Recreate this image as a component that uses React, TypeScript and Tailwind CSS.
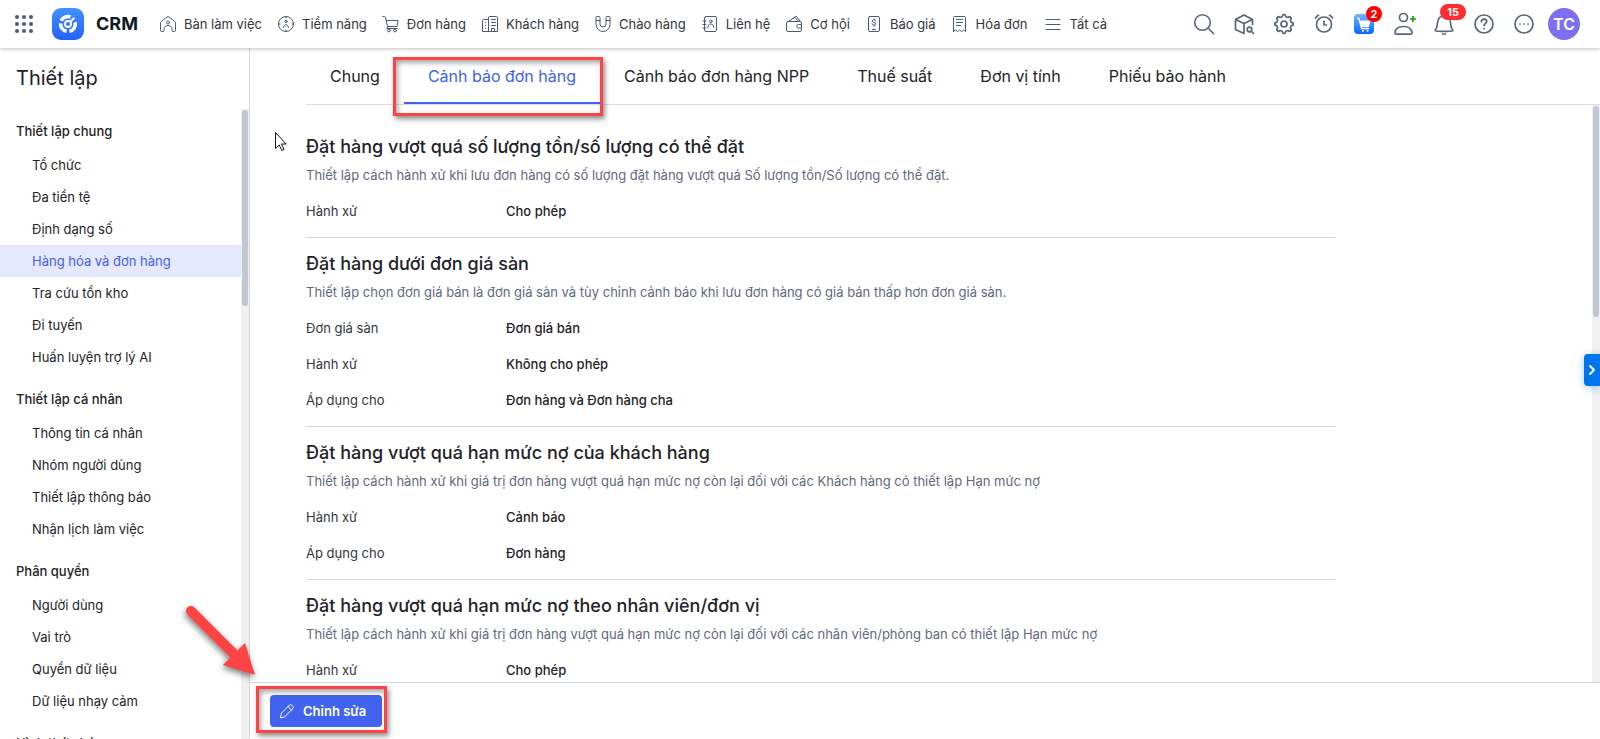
import type { ReactNode, SVGProps } from "react";
import { clsx } from "clsx";

interface Row {
  label: string;
  value: string;
}

interface Section {
  title: string;
  description: string;
  rows: Row[];
}

interface MenuGroup {
  title: string;
  items: string[];
}

const MENU: MenuGroup[] = [
  {
    title: "Thiết lập chung",
    items: [
      "Tổ chức",
      "Đa tiền tệ",
      "Định dạng số",
      "Hàng hóa và đơn hàng",
      "Tra cứu tồn kho",
      "Đi tuyến",
      "Huấn luyện trợ lý AI",
    ],
  },
  {
    title: "Thiết lập cá nhân",
    items: ["Thông tin cá nhân", "Nhóm người dùng", "Thiết lập thông báo", "Nhận lịch làm việc"],
  },
  {
    title: "Phân quyền",
    items: ["Người dùng", "Vai trò", "Quyền dữ liệu", "Dữ liệu nhạy cảm"],
  },
  { title: "Hình thức bán", items: [] },
];

const TABS = [
  "Chung",
  "Cảnh báo đơn hàng",
  "Cảnh báo đơn hàng NPP",
  "Thuế suất",
  "Đơn vị tính",
  "Phiếu bảo hành",
];

const SECTIONS: Section[] = [
  {
    title: "Đặt hàng vượt quá số lượng tồn/số lượng có thể đặt",
    description:
      "Thiết lập cách hành xử khi lưu đơn hàng có số lượng đặt hàng vượt quá Số lượng tồn/Số lượng có thể đặt.",
    rows: [{ label: "Hành xử", value: "Cho phép" }],
  },
  {
    title: "Đặt hàng dưới đơn giá sàn",
    description:
      "Thiết lập chọn đơn giá bán là đơn giá sàn và tùy chỉnh cảnh báo khi lưu đơn hàng có giá bán thấp hơn đơn giá sàn.",
    rows: [
      { label: "Đơn giá sàn", value: "Đơn giá bán" },
      { label: "Hành xử", value: "Không cho phép" },
      { label: "Áp dụng cho", value: "Đơn hàng và Đơn hàng cha" },
    ],
  },
  {
    title: "Đặt hàng vượt quá hạn mức nợ của khách hàng",
    description:
      "Thiết lập cách hành xử khi giá trị đơn hàng vượt quá hạn mức nợ còn lại đối với các Khách hàng có thiết lập Hạn mức nợ",
    rows: [
      { label: "Hành xử", value: "Cảnh báo" },
      { label: "Áp dụng cho", value: "Đơn hàng" },
    ],
  },
  {
    title: "Đặt hàng vượt quá hạn mức nợ theo nhân viên/đơn vị",
    description:
      "Thiết lập cách hành xử khi giá trị đơn hàng vượt quá hạn mức nợ còn lại đối với các nhân viên/phòng ban có thiết lập Hạn mức nợ",
    rows: [{ label: "Hành xử", value: "Cho phép" }],
  },
];

// Line icon base, 1 unit = 1 pixel
function Icon({ size = 18, children, ...rest }: SVGProps<SVGSVGElement> & { size?: number }) {
  return (
    <svg
      width={size}
      height={size}
      viewBox={`0 0 ${size} ${size}`}
      fill="none"
      stroke="currentColor"
      strokeWidth={1}
      strokeLinecap="round"
      strokeLinejoin="round"
      className="shrink-0"
      aria-hidden="true"
      {...rest}
    >
      {children}
    </svg>
  );
}

const NAV: { label: string; icon: ReactNode }[] = [
  {
    label: "Bàn làm việc",
    icon: (
      <Icon>
        <path d="M4 16.500H2.500a1 1 0 0 1-1-1V8a2 2 0 0 1 .8-1.600L8 2a1.600 1.600 0 0 1 2 0l5.700 4.400a2 2 0 0 1 .8 1.600v7.500a1 1 0 0 1-1 1H14a1 1 0 0 1-1-1V14c0-2-1.500-3.500-4-3.500S5 12 5 14v1.500a1 1 0 0 1-1 1Z" />
        <circle cx="9" cy="7.500" r="1.500" />
      </Icon>
    ),
  },
  {
    label: "Tiềm năng",
    icon: (
      <Icon>
        <circle cx="9" cy="9" r="7.500" />
        <path d="M9 1.500v1.500M9 15v1.500M1.500 9h1.500M15 9h1.500M6.500 12.500c.3-1.800 1.200-2.800 2.500-2.800s2.200 1 2.500 2.800" />
        <circle cx="9" cy="6.500" r="1.200" />
      </Icon>
    ),
  },
  {
    label: "Đơn hàng",
    icon: (
      <Icon>
        <path d="M.8 1.500h1.700a1 1 0 0 1 1 .8l2 9.200h9.500l1.200-6H4.200M5.500 11.500l-.5 2h10" />
        <circle cx="7" cy="15.500" r="1.400" />
        <circle cx="13" cy="15.500" r="1.400" />
      </Icon>
    ),
  },
  {
    label: "Khách hàng",
    icon: (
      <Icon>
        <path d="M7.500 16.500v-14a1 1 0 0 1 1-1h7a1 1 0 0 1 1 1v14H1.500v-11a1 1 0 0 1 1-1h5M10.500 4.500h4M10.500 7.500h4M10.500 10.500h4M10.500 16.500v-3h3v3M4.500 7.500v.1M4.500 10.500v.1M4.500 13.500v.1" />
      </Icon>
    ),
  },
  {
    label: "Chào hàng",
    icon: (
      <Icon>
        <path d="M2 2.500a1 1 0 0 1 1-1h2a1 1 0 0 1 1 1V9a3 3 0 0 0 6 0V2.500a1 1 0 0 1 1-1h2a1 1 0 0 1 1 1V9.500a7 7 0 0 1-14 0ZM2 5.500h4M12 5.500h4" />
      </Icon>
    ),
  },
  {
    label: "Liên hệ",
    icon: (
      <Icon>
        <rect x="3.500" y="1.500" width="12" height="15" rx="1.500" />
        <path d="M2 6h3M2 9.500h3M2 13h3M6.800 12.500C7.300 10 8.200 9 9.800 9s2.500 1 3 3.500" />
        <circle cx="9.800" cy="6.300" r="1.300" />
      </Icon>
    ),
  },
  {
    label: "Cơ hội",
    icon: (
      <Icon>
        <rect x="1.500" y="6.500" width="15" height="10" rx="1.500" />
        <path d="M3.500 6.200 9.800 2.300l3.700 3.900M7.500 3.500l3.800-2.300 3.800 5M16.500 9.500h-3a1.800 1.800 0 0 0 0 3.600h3" />
      </Icon>
    ),
  },
  {
    label: "Báo giá",
    icon: (
      <Icon>
        <rect x="3.500" y="1.500" width="11" height="15" rx="1.500" />
        <path d="M7.500 14.500h3M10.800 6c-.2-.8-.9-1.200-1.800-1.200-1 0-1.800.5-1.800 1.300 0 2 3.600.8 3.600 2.800 0 .8-.8 1.300-1.800 1.300s-1.700-.5-1.900-1.300M9 4v1M9 10.200v1" />
      </Icon>
    ),
  },
  {
    label: "Hóa đơn",
    icon: (
      <Icon>
        <path d="M2.500 16.500v-14a1 1 0 0 1 1-1h10a1 1 0 0 1 1 1v14l-2-1.500-2 1.500-2-1.500-2 1.500-2-1.500ZM5.500 4.500h6M5.500 7.500h6M5.500 10.500h4" />
      </Icon>
    ),
  },
  {
    label: "Tất cả",
    icon: (
      <Icon size={20}>
        <path d="M3 5.500h14M3 10.500h14M3 15.500h14" />
      </Icon>
    ),
  },
];

function AppLogo() {
  return (
    <svg width="32" height="32" viewBox="0 0 32 32" className="shrink-0" aria-hidden="true">
      <defs>
        <linearGradient id="logo" x1="0" y1="0" x2="0" y2="1">
          <stop offset="0" stopColor="#3f93fd" />
          <stop offset="1" stopColor="#2461fb" />
        </linearGradient>
      </defs>
      <rect width="32" height="32" rx="9" fill="url(#logo)" />
      <g fill="none" stroke="#fff">
        <path d="M9.200 12.800A7.400 7.400 0 0 1 18.500 9" strokeWidth="3.600" />
        <path d="M23.200 14.200A7.400 7.400 0 0 1 17.400 23.300" strokeWidth="3.600" />
        <path d="M14.600 23.300A7.400 7.400 0 0 1 8.600 15.400" strokeWidth="3.600" />
        <circle cx="16" cy="16" r="3" strokeWidth="1.900" />
        <path d="m18.300 13.700 3.500-3.500" strokeWidth="2" strokeLinecap="round" />
      </g>
    </svg>
  );
}

function Header() {
  return (
    <header className="relative z-20 flex h-12 shrink-0 items-center bg-white pr-5 pl-[15px] shadow-[0_1px_4px_rgba(0,0,0,0.25)]">
      <button type="button" aria-label="Ứng dụng" className="text-[#4d5a75]">
        <svg width="18" height="18" viewBox="0 0 18 18" fill="currentColor" aria-hidden="true">
          {[2, 9, 16].map((y) => [2, 9, 16].map((x) => <circle key={`${x}-${y}`} cx={x} cy={y} r="2" />))}
        </svg>
      </button>
      <a href="#" className="ml-[19px] flex items-center gap-3 text-lg font-bold text-[#111827]">
        <AppLogo />
        CRM
      </a>
      <nav className="ml-[21px] flex items-center gap-[15px] text-[13px] text-[#33363f]">
        {NAV.map((item) => (
          <a key={item.label} href="#" className="flex items-center gap-[7px] whitespace-nowrap">
            <span className="text-[#4d5a75]">{item.icon}</span>
            <span className="pt-0.5">{item.label}</span>
          </a>
        ))}
      </nav>
      <div className="ml-auto flex items-center gap-4 text-[#5b6579]">
        <button type="button" aria-label="Tìm kiếm">
          <Icon size={24} strokeWidth={1.600}>
            <circle cx="10.500" cy="10.500" r="7.800" />
            <path d="m16 16 5.500 5.500" />
          </Icon>
        </button>
        <button type="button" aria-label="Tra cứu hàng hóa">
          <Icon size={24} strokeWidth={1.700}>
            <path d="M12 21.500 3.500 17.500V7.500L12 3l8.500 4.500v5M3.500 7.500l8.500 4 8.500-4M12 11.500v10" />
            <circle cx="17.500" cy="17.500" r="2.300" />
            <path d="m19.500 19.500 2 2" />
          </Icon>
        </button>
        <button type="button" aria-label="Thiết lập">
          <Icon size={24} strokeWidth={1.700}>
            <path d="m10.200 4.700.8-2h2l.8 2 2 .8 2-.9 1.500 1.500-.9 2 .8 2 2 .9v2l-2 .9-.8 2 .9 2-1.500 1.500-2-.9-2 .8-.8 2h-2l-.8-2-2-.8-2 .9-1.500-1.500.9-2-.8-2-2-.9v-2l2-.9.8-2-.9-2 1.500-1.500 2 .9Z" />
            <circle cx="12" cy="12" r="3" />
          </Icon>
        </button>
        <button type="button" aria-label="Nhắc nhở">
          <Icon size={24} strokeWidth={1.700}>
            <circle cx="12" cy="12.500" r="7.500" />
            <path d="M12 9v4h2.500M3.500 6c.7-1.300 1.700-2.200 3-2.800M20.500 6c-.7-1.300-1.700-2.200-3-2.800" />
          </Icon>
        </button>
        <button type="button" aria-label="Giỏ hàng" className="relative">
          <svg width="24" height="24" viewBox="0 0 24 24" fill="none" aria-hidden="true">
            <defs>
              <linearGradient id="cart" x1="0" y1="0" x2="0" y2="1">
                <stop offset="0" stopColor="#74b5ff" />
                <stop offset="1" stopColor="#0a66ff" />
              </linearGradient>
            </defs>
            <rect x="2" y="2" width="20" height="20" rx="4" fill="url(#cart)" />
            <path d="M7.500 8.500h11l-1.700 6.500H9.500Z" fill="#fff" />
            <path d="M5 6.500h2L9.500 16.500h7.500" stroke="#fff" strokeWidth="1.300" />
            <circle cx="11" cy="18.700" r="1" fill="#fff" />
            <circle cx="15.500" cy="18.700" r="1" fill="#fff" />
          </svg>
          <span className="absolute -top-1.5 -right-1.5 flex size-4 items-center justify-center rounded-full bg-[#fe0000] text-[11px] font-bold text-white">
            2
          </span>
        </button>
        <button type="button" aria-label="Thêm người dùng">
          <Icon size={24} strokeWidth={1.700}>
            <circle cx="11.500" cy="5.500" r="4" />
            <path d="M4.500 22.200h14a1.500 1.500 0 0 0 1.500-1.700c-.5-4-3.700-6-8.500-6S3.500 16.500 3 20.500a1.500 1.500 0 0 0 1.500 1.700Z" />
            <path d="M21 4v6M18 7h6" stroke="#1c9a10" strokeLinecap="butt" />
          </Icon>
        </button>
        <button type="button" aria-label="Thông báo" className="relative">
          <Icon size={24} strokeWidth={1.700}>
            <path d="M3 18.500c2.500-2.500 2-4.500 2.500-8C6 6.500 8.500 4 12 4s6 2.500 6.500 6.500c.5 3.500 0 5.500 2.500 8-3 1.300-15 1.300-18 0Z" />
            <path d="M10.500 22h3" />
          </Icon>
          <span className="absolute -top-2 -right-2.5 flex h-4 items-center justify-center rounded-full bg-[#fd2c2e] px-[7px] text-[11px] font-bold text-white">
            15
          </span>
        </button>
        <button type="button" aria-label="Trợ giúp">
          <Icon size={24} strokeWidth={1.700}>
            <circle cx="12" cy="12" r="9" />
            <path d="M9.300 9.700c0-1.500 1.200-2.500 2.700-2.500s2.700 1 2.700 2.400c0 2-2.700 2-2.700 4M12 16.500v.2" />
          </Icon>
        </button>
        <button type="button" aria-label="Thêm">
          <Icon size={24} strokeWidth={1.700}>
            <circle cx="12" cy="12" r="9" />
            <path d="M8 12h.1M12 12h.1M16 12h.1" />
          </Icon>
        </button>
        <button
          type="button"
          className="-ml-1 flex size-8 items-center justify-center rounded-full bg-[#7e6ff0] text-base font-semibold text-white"
        >
          TC
        </button>
      </div>
    </header>
  );
}

function Sidebar() {
  return (
    <aside className="flex w-[250px] shrink-0 flex-col border-r border-[#d3d7de]">
      <h1 className="px-4 pt-4 pb-[17px] text-xl text-[#1f2229]">Thiết lập</h1>
      <div className="flex min-h-0 flex-1">
        <nav className="flex-1 overflow-hidden pt-1 text-[13px] text-[#1f2229]">
          {MENU.map((group) => (
            <section key={group.title} className="mb-2">
              <h2 className="px-4 font-medium leading-9">{group.title}</h2>
              <ul>
                {group.items.map((item) => (
                  <li key={item}>
                    <a
                      href="#"
                      className={clsx(
                        "block pl-8 leading-8",
                        item === "Hàng hóa và đơn hàng" && "bg-[#e6e9fe] text-[#4262f0]",
                      )}
                    >
                      {item}
                    </a>
                  </li>
                ))}
              </ul>
            </section>
          ))}
        </nav>
        <div className="w-2 bg-[#f0f0f0] px-px pt-px">
          <div className="h-[196px] rounded-full bg-[#c1c6d2]" />
        </div>
      </div>
    </aside>
  );
}

function Tabs() {
  return (
    <div role="tablist" className="ml-14 flex h-[57px] shrink-0 border-b border-[#dcdee2] text-base text-[#1f2229]">
      {TABS.map((tab) => {
        const active = tab === "Cảnh báo đơn hàng";
        return (
          <button
            key={tab}
            type="button"
            role="tab"
            aria-selected={active}
            className={clsx(
              "relative border-b-2 px-6 pt-0.5 whitespace-nowrap",
              active ? "border-[#4262f0] text-[#4262f0]" : "border-transparent",
            )}
          >
            {tab}
            {active && (
              <span className="absolute top-[9px] -right-[3px] -bottom-[14px] -left-[11px] border-3 border-[#fd4343] shadow-[2px_3px_5px_rgba(0,0,0,0.45),inset_2px_3px_5px_rgba(0,0,0,0.35)]" />
            )}
          </button>
        );
      })}
    </div>
  );
}

function SettingSection({ title, description, rows }: Section) {
  return (
    <section className="border-b border-[#d3d7de] pt-3 pb-2">
      <h2 className="text-lg font-medium leading-7 text-[#1f2229]">{title}</h2>
      <p className="mt-1 text-[13px] leading-5 text-[#5f6880]">{description}</p>
      <dl className="mt-2 text-[13px] leading-9">
        {rows.map((row) => (
          <div key={row.label} className="flex">
            <dt className="w-[200px] text-[#33363f]">{row.label}</dt>
            <dd className="font-medium text-[#1f2229]">{row.value}</dd>
          </div>
        ))}
      </dl>
    </section>
  );
}

// Arrow and mouse pointer lying over the page
function Overlay() {
  return (
    <>
      <svg
        width="80"
        height="80"
        viewBox="0 0 80 80"
        className="pointer-events-none absolute top-[602px] left-[180px] z-10 drop-shadow-[-1px_3px_3px_rgba(0,0,0,0.5)]"
        aria-hidden="true"
      >
        <path d="m11 9 42 42" stroke="#fd4343" strokeWidth="10" strokeLinecap="round" />
        <path d="M75 73 65 41 43 63Z" fill="#fd4343" />
      </svg>
      <svg
        width="14"
        height="21"
        viewBox="0 0 14 21"
        className="pointer-events-none absolute top-[131px] left-[274px] z-10"
        aria-hidden="true"
      >
        <path d="M1.500 1.500v16l3.700-3.500 2.600 5.500 2.200-1-2.500-5.500h4.700Z" fill="#fff" stroke="#14141f" />
      </svg>
    </>
  );
}

export default function App() {
  return (
    <div className="relative flex h-screen flex-col overflow-hidden bg-white font-[Inter,'Noto_Sans',sans-serif]">
      <Header />
      <div className="flex min-h-0 flex-1">
        <Sidebar />
        <main className="flex min-w-0 flex-1 flex-col">
          <Tabs />
          <div className="flex min-h-0 flex-1">
            <div className="flex-1 overflow-hidden pt-4 pr-[257px] pl-14">
              {SECTIONS.map((section) => (
                <SettingSection key={section.title} {...section} />
              ))}
            </div>
            <div className="w-2 bg-[#f0f0f0] px-px pt-px">
              <div className="h-[211px] rounded-full bg-[#c1c6d2]" />
            </div>
          </div>
          <footer className="flex h-[57px] shrink-0 items-start border-t border-[#d3d7de] px-5 pt-3">
            <button
              type="button"
              className="relative flex h-8 items-center gap-2 rounded bg-[#4262f0] pr-4 pl-[9px] text-[13px] font-semibold text-white"
            >
              <Icon size={16}>
                <path d="m1.500 14.500 1-4.500 8-8a1.400 1.400 0 0 1 2 0l1.500 1.500a1.400 1.400 0 0 1 0 2l-8 8ZM9 3.500 12.500 7" />
              </Icon>
              <span className="pt-0.5">Chỉnh sửa</span>
              <span className="absolute -top-[9px] -right-[5px] -bottom-[6px] -left-[14px] border-3 border-[#fd4343] shadow-[2px_3px_5px_rgba(0,0,0,0.45),inset_2px_3px_5px_rgba(0,0,0,0.35)]" />
            </button>
          </footer>
        </main>
      </div>
      <button
        type="button"
        aria-label="Mở rộng"
        className="absolute top-[354px] right-0 z-10 flex h-8 w-4 items-center justify-center rounded-l bg-[#0075eb] text-white shadow-[0_2px_8px_rgba(0,117,235,0.35)]"
      >
        <Icon size={12} strokeWidth={2}>
          <path d="m4 2 4 4-4 4" />
        </Icon>
      </button>
      <Overlay />
    </div>
  );
}
